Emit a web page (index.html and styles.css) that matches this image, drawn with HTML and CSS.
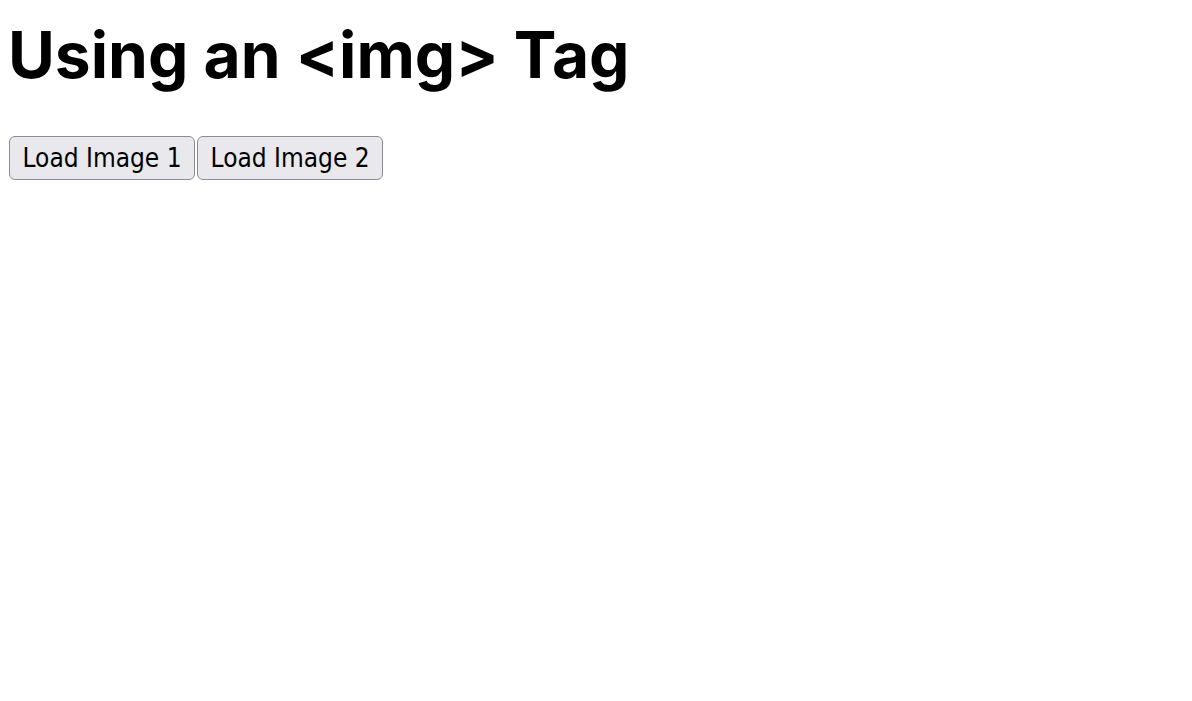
FILE: index.html
```html
<!DOCTYPE html>
<html lang="en">
<head>
<meta charset="utf-8">
<title>Using an img Tag</title>
<link rel="stylesheet" href="styles.css">
</head>
<body>
<h1 class="title">Using an &lt;img&gt; Tag</h1>
<div class="controls">
<button class="btn" type="button">Load Image 1</button>
<button class="btn" type="button">Load Image 2</button>
</div>
</body>
</html>
```

FILE: styles.css
```css
html, body {
  background: #ffffff;
}
body {
  margin: 8px;
  font-family: "Inter", sans-serif;
  color: #000;
}
.title {
  font-family: "Inter", sans-serif;
  font-weight: 700;
  font-size: 64px;
  line-height: 78px;
  margin: 8px 0 42px 0;
}
.controls {
  display: flex;
  gap: 2px;
  margin-left: 1px;
}
.btn {
  font-family: "DejaVu Sans Condensed", "DejaVu Sans", sans-serif;
  font-size: 26px;
  line-height: 30px;
  color: #000;
  background: #e9e9ed;
  border: 1px solid #8a8a96;
  border-radius: 6px;
  padding: 6px 12.5px 6px 12.5px;
  margin: 0;
}
```
